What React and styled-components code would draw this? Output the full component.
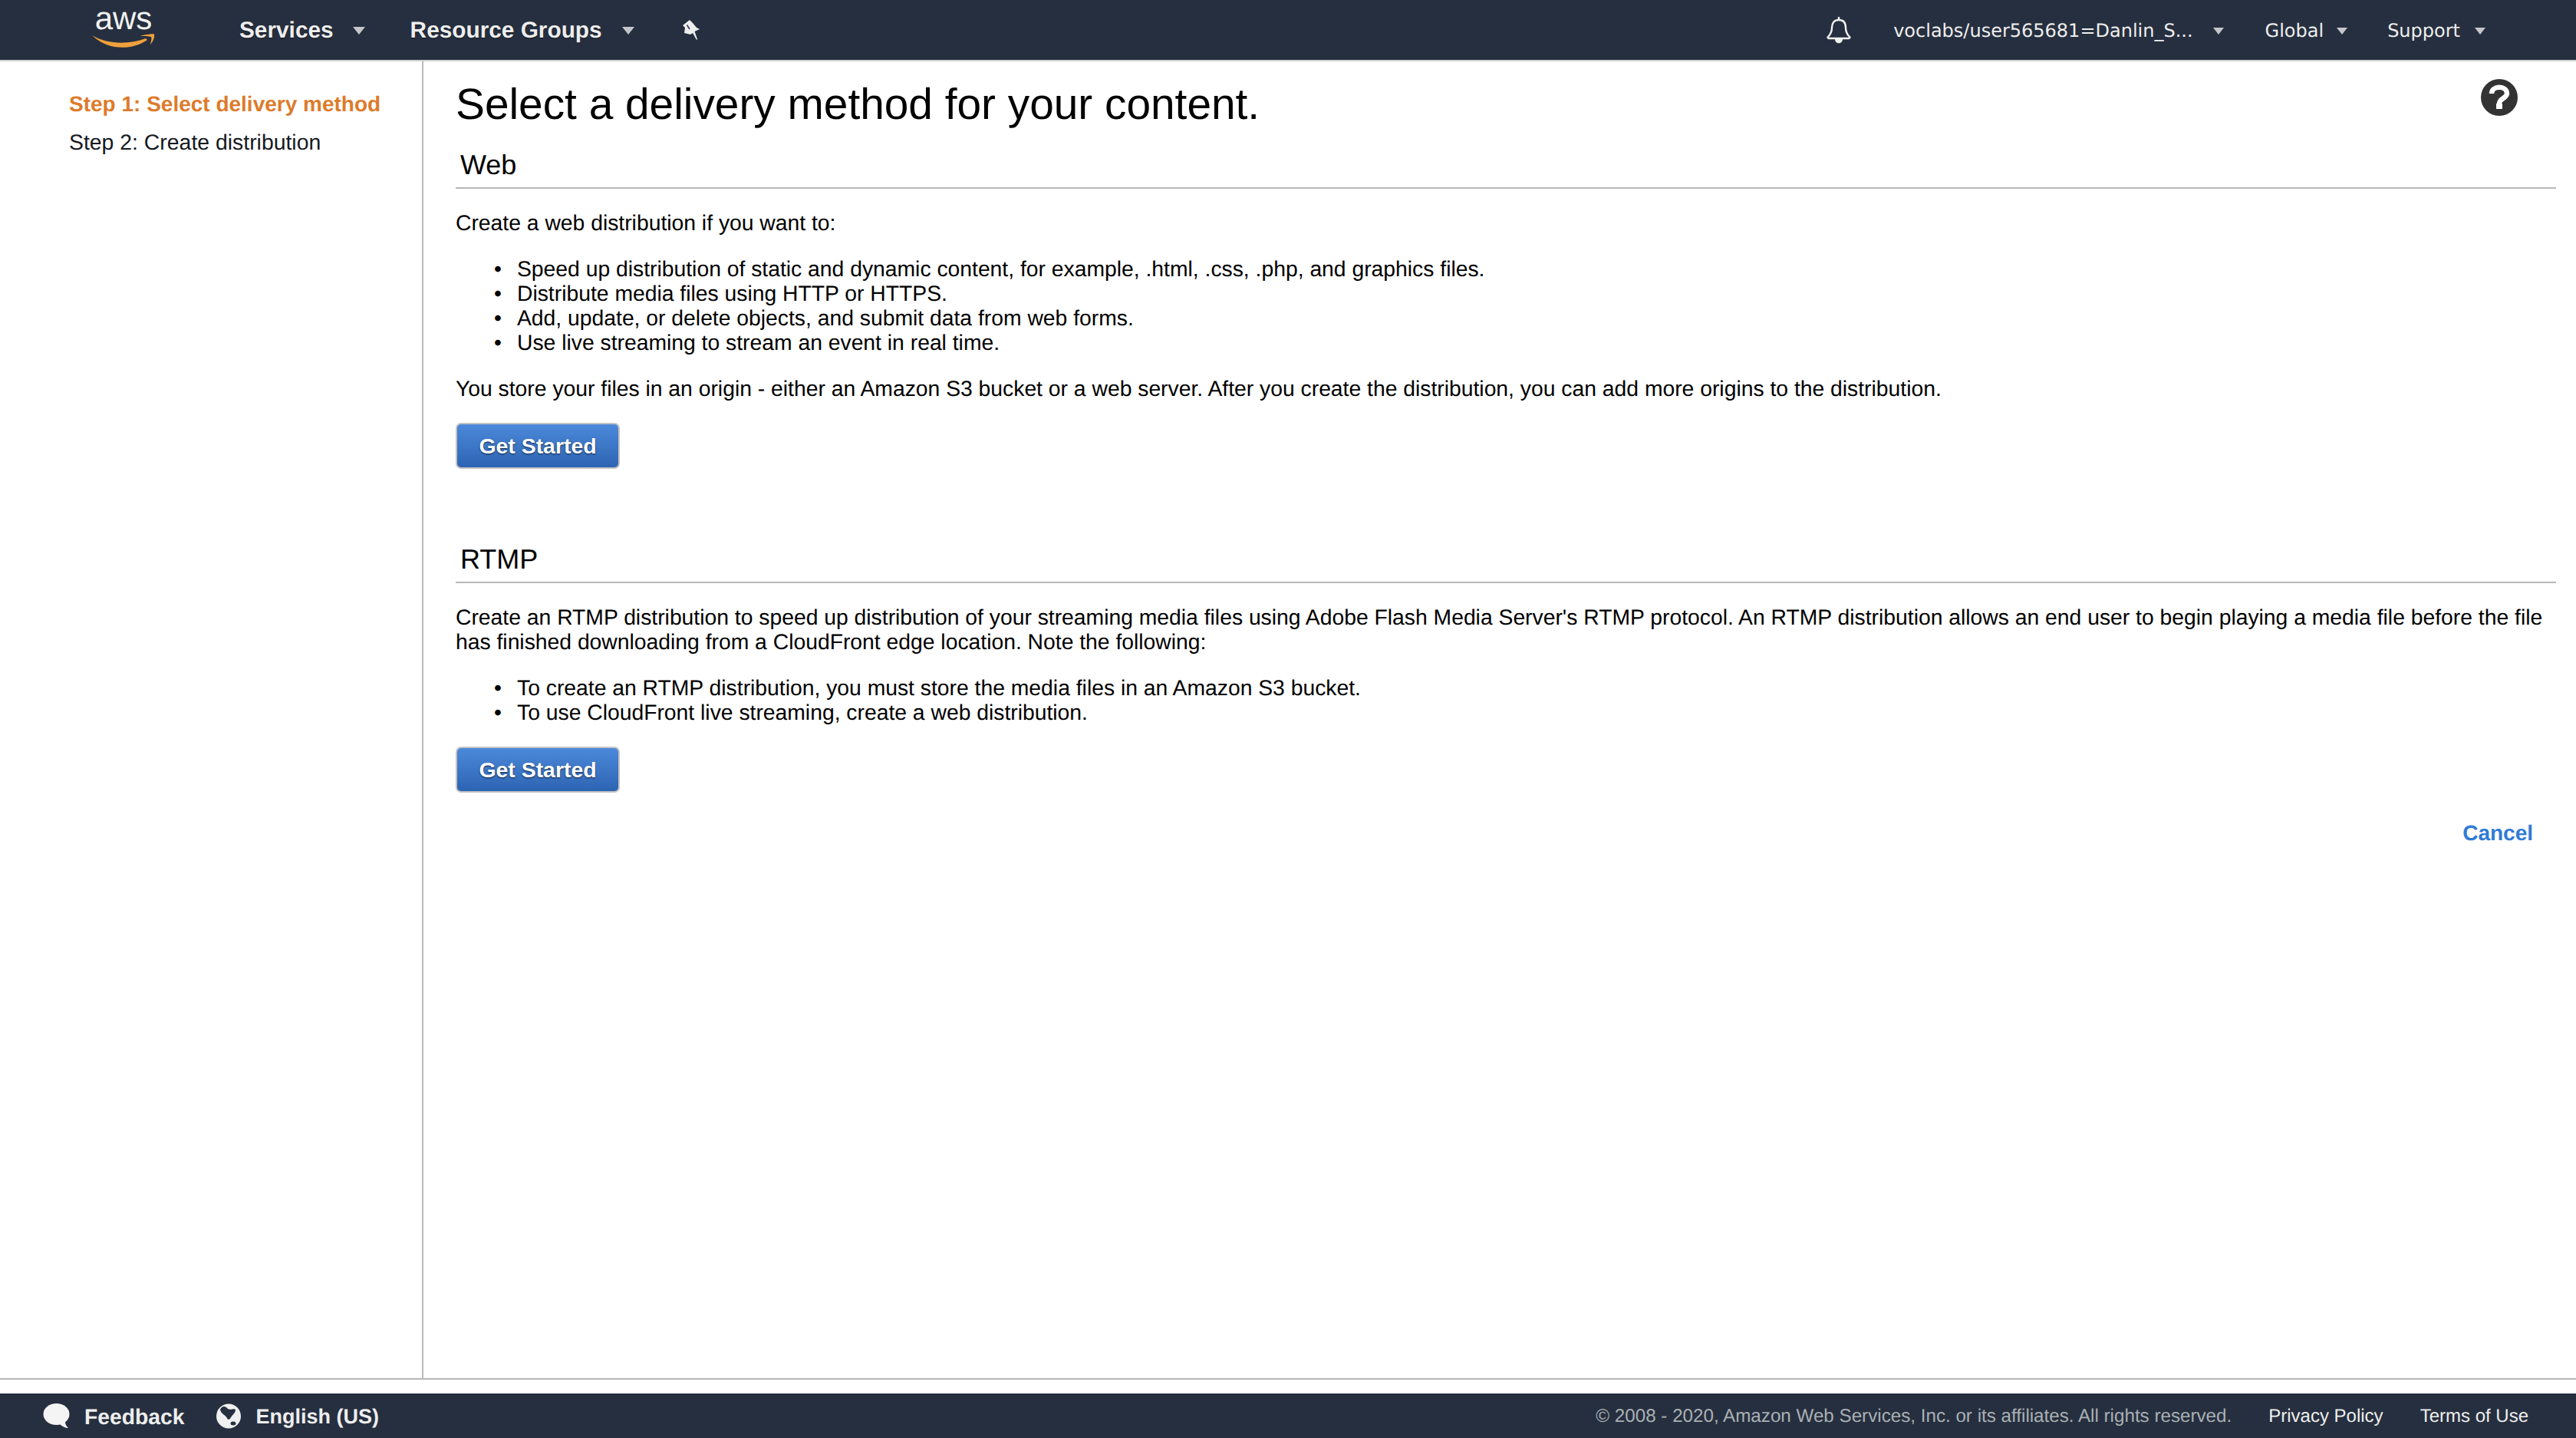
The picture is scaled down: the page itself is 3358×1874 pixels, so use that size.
import React from 'react';
import styled, { createGlobalStyle } from 'styled-components';

const GlobalStyle = createGlobalStyle`
  html, body {
    margin: 0;
    padding: 0;
    background: #fff;
  }
  body {
    font-family: "Liberation Sans", Arial, sans-serif;
    color: #000;
    text-rendering: geometricPrecision;
  }
`;

const Page = styled.div`
  display: flex;
  flex-direction: column;
  width: 3358px;
  height: 1874px;
  overflow: hidden;
`;

const TopNav = styled.header`
  display: flex;
  align-items: center;
  flex: 0 0 78px;
  background: #262f3f;
  border-bottom: 2px solid #d0d0d0;
  color: #eee;
`;

const LogoSlot = styled.div`
  display: flex;
  width: 312px;
  padding-left: 118px;
  box-sizing: border-box;
`;

const NavItem = styled.div`
  display: flex;
  align-items: center;
  padding-top: 2px;
  font-weight: 700;
  font-size: 29.8px;
  margin-right: ${props => props.$gap || 0}px;
  text-shadow: 0 1px 1px rgba(0, 0, 0, 0.6);
`;

const Caret = styled.span`
  width: 0;
  height: 0;
  margin-left: ${props => props.$gap}px;
  border-left: ${props => props.$size}px solid transparent;
  border-right: ${props => props.$size}px solid transparent;
  border-top: ${props => props.$size + 2}px solid #c4c6ca;
`;

const NavSpacer = styled.div`
  flex: 1;
`;

const AccountItem = styled.div`
  display: flex;
  align-items: center;
  padding-top: 2px;
  font-family: "DejaVu Sans", sans-serif;
  font-size: 24px;
  margin-right: ${props => props.$gap}px;
  color: #eee;
`;

const BellSlot = styled.div`
  display: flex;
  margin-right: 55px;
`;

const Main = styled.div`
  display: flex;
  flex: 1;
  min-height: 0;
  border-bottom: 2px solid #b8b8b8;
`;

const Sidebar = styled.nav`
  flex: 0 0 460px;
  padding: 30px 0 0 90px;
  border-right: 2px solid #b8b8b8;
`;

const StepLink = styled.div`
  font-size: ${props => (props.$active ? 28 : 28.4)}px;
  line-height: 51px;
  font-weight: ${props => (props.$active ? 700 : 400)};
  color: ${props => (props.$active ? '#dd7b2b' : '#16191f')};
`;

const Content = styled.main`
  position: relative;
  flex: 1;
  padding: 24px 26px 0 42px;
`;

const PageTitle = styled.h1`
  margin: 0;
  font-size: 56.8px;
  line-height: 66px;
  font-weight: 400;
`;

const SectionHeading = styled.h2`
  margin: ${props => props.$top}px 0 0;
  padding: 0 0 7px 6px;
  font-size: 36px;
  line-height: 44px;
  font-weight: 400;
  border-bottom: 2px solid #b8b8b8;
`;

const Para = styled.p`
  margin: ${props => props.$top}px 0 0;
  font-size: 28.3px;
  line-height: 32px;
`;

const BulletList = styled.ul`
  margin: 28px 0 0;
  padding-left: 80px;
  font-size: 28.3px;
  line-height: 32px;
  list-style: none;
`;

const Bullet = styled.li`
  &::before {
    content: '•';
    display: inline-block;
    width: 30px;
    margin-left: -30px;
  }
`;

const GetStarted = styled.button`
  display: block;
  width: 214px;
  height: 60px;
  margin-top: ${props => props.$top}px;
  padding: 0;
  font-family: inherit;
  font-size: 28.4px;
  font-weight: 700;
  color: #fff;
  text-shadow: 0 1px 2px rgba(0, 0, 0, 0.7);
  background: linear-gradient(#4c89da, #2d64b2);
  border: 2px solid #c4c4c4;
  border-radius: 7px;
`;

const CancelRow = styled.div`
  display: flex;
  justify-content: flex-end;
  margin-top: 37px;
  padding-right: 30px;
`;

const CancelLink = styled.a`
  font-size: 28px;
  font-weight: 700;
  color: #2f7bd6;
`;

const HelpButton = styled.div`
  position: absolute;
  top: 23px;
  right: 76px;
  display: flex;
`;

const Footer = styled.footer`
  display: flex;
  align-items: center;
  flex: 0 0 58px;
  margin-top: 18px;
  background: #262f3f;
`;

const FooterItem = styled.div`
  display: flex;
  align-items: center;
  margin-left: ${props => props.$left}px;
  font-size: ${props => props.$size}px;
  font-weight: 700;
  color: #eee;
`;

const FooterIcon = styled.span`
  display: flex;
  margin-right: ${props => props.$gap}px;
`;

const FooterLabel = styled.span`
  padding-top: 2px;
`;

const FooterLegal = styled.div`
  margin-left: auto;
  display: flex;
  align-items: center;
  padding-top: 2px;
  font-size: 24px;
  padding-right: 62px;
`;

const Copyright = styled.span`
  color: #a9b0b4;
  font-size: 24.2px;
  margin-right: 48px;
`;

const FooterLink = styled.a`
  color: #eee;
  margin-left: ${props => props.$left || 0}px;
`;

const AwsLogo = () => (
  <svg width="86" height="78" viewBox="0 -6 86 78">
    <text x="43" y="32" textAnchor="middle" fontFamily="Liberation Sans, sans-serif" fontSize="42" fill="#f2f2f2">aws</text>
    <path d="M2 40 C 20 51, 48 53, 72 44 L74 46 C 54 60, 22 60, 2 40 Z" fill="#f0a03c" />
    <path d="M65 41 C 72 39 80 38 83 38.5 C 84 43 81 49 78 52 C 79 47 80 44 79 42 C 76 41 70 41 65 41 Z" fill="#f0a03c" />
  </svg>
);

const PinIcon = () => (
  <svg width="24" height="27" viewBox="0 0 24 27">
    <path d="M10 0 L1 7 L4 10 L3 17 L11 19 L14 17 L19 26 L20 25 L16.5 15 L23 12 L19 10 L14 4 Z" fill="#eee" />
    <path d="M6.5 6.5 L10 12" stroke="#262f3f" strokeWidth="1.4" />
  </svg>
);

const BellIcon = () => (
  <svg width="32" height="35" viewBox="0 0 32 35" fill="none" stroke="#f2f2f2" strokeWidth="2.4">
    <path d="M16 4 C 10 4 7 8 7 14 C 7 20 5 23 2 26 C 1 27 2 28 3 28 H29 C30 28 31 27 30 26 C27 23 25 20 25 14 C25 8 22 4 16 4 Z" strokeLinejoin="round" />
    <path d="M16 0 V4" />
    <path d="M11 29 C11 36 21 36 21 29 Z" fill="#f2f2f2" stroke="none" />
  </svg>
);

const HelpIcon = () => (
  <svg width="48" height="48" viewBox="0 0 48 48">
    <circle cx="24" cy="24" r="24" fill="#333" />
    <path d="M14 19 C14 8 34 8 34 19 C34 25 24 25 24 32" fill="none" stroke="#fff" strokeWidth="6.5" />
    <rect x="20" y="32" width="8" height="7" fill="#fff" />
  </svg>
);

const BubbleIcon = () => (
  <svg width="35" height="33" viewBox="0 0 35 33">
    <ellipse cx="17.5" cy="14" rx="17" ry="14" fill="#f4f4f4" />
    <path d="M21 26 C 25 30 29 32 33 32 C 30 29 28.5 26 29 22 Z" fill="#f4f4f4" />
  </svg>
);

const GlobeIcon = () => (
  <svg width="32" height="33" viewBox="0 0 32 33">
    <circle cx="16" cy="16.5" r="16" fill="#f0f0f0" />
    <path d="M5 8 C 7 3 12 3 15 7 C 18 9 24 6 25 8 C 25 13 20 15 18 20 L15 21 C 13 15 6 14 5 8 Z" fill="#262f3f" />
    <ellipse cx="22" cy="26" rx="3.5" ry="2.5" fill="#262f3f" />
  </svg>
);

export default function App() {
  return (
    <Page>
      <GlobalStyle />
      <TopNav>
        <LogoSlot>
          <AwsLogo />
        </LogoSlot>
        <NavItem $gap={59}>
          Services
          <Caret $gap={25} $size={8} />
        </NavItem>
        <NavItem $gap={62}>
          Resource Groups
          <Caret $gap={26} $size={8} />
        </NavItem>
        <PinIcon />
        <NavSpacer />
        <BellSlot>
          <BellIcon />
        </BellSlot>
        <AccountItem $gap={54}>
          voclabs/user565681=Danlin_S...
          <Caret $gap={26} $size={7} />
        </AccountItem>
        <AccountItem $gap={52}>
          Global
          <Caret $gap={17} $size={7} />
        </AccountItem>
        <AccountItem $gap={118}>
          Support
          <Caret $gap={19} $size={7} />
        </AccountItem>
      </TopNav>
      <Main>
        <Sidebar>
          <StepLink $active>Step 1: Select delivery method</StepLink>
          <StepLink>Step 2: Create distribution</StepLink>
        </Sidebar>
        <Content>
          <HelpButton>
            <HelpIcon />
          </HelpButton>
          <PageTitle>Select a delivery method for your content.</PageTitle>
          <SectionHeading $top={23}>Web</SectionHeading>
          <Para $top={28}>Create a web distribution if you want to:</Para>
          <BulletList>
            <Bullet>Speed up distribution of static and dynamic content, for example, .html, .css, .php, and graphics files.</Bullet>
            <Bullet>Distribute media files using HTTP or HTTPS.</Bullet>
            <Bullet>Add, update, or delete objects, and submit data from web forms.</Bullet>
            <Bullet>Use live streaming to stream an event in real time.</Bullet>
          </BulletList>
          <Para $top={28}>
            You store your files in an origin - either an Amazon S3 bucket or a web server. After you create the distribution, you can add more origins to the distribution.
          </Para>
          <GetStarted $top={29}>Get Started</GetStarted>
          <SectionHeading $top={96}>RTMP</SectionHeading>
          <Para $top={28}>
            Create an RTMP distribution to speed up distribution of your streaming media files using Adobe Flash Media Server's RTMP protocol. An RTMP distribution allows an end user to begin playing a media file before the file has finished downloading from a CloudFront edge location. Note the following:
          </Para>
          <BulletList>
            <Bullet>To create an RTMP distribution, you must store the media files in an Amazon S3 bucket.</Bullet>
            <Bullet>To use CloudFront live streaming, create a web distribution.</Bullet>
          </BulletList>
          <GetStarted $top={29}>Get Started</GetStarted>
          <CancelRow>
            <CancelLink>Cancel</CancelLink>
          </CancelRow>
        </Content>
      </Main>
      <Footer>
        <FooterItem $left={56} $size={28.3}>
          <FooterIcon $gap={19}>
            <BubbleIcon />
          </FooterIcon>
          <FooterLabel>Feedback</FooterLabel>
        </FooterItem>
        <FooterItem $left={41} $size={27}>
          <FooterIcon $gap={20}>
            <GlobeIcon />
          </FooterIcon>
          <FooterLabel>English (US)</FooterLabel>
        </FooterItem>
        <FooterLegal>
          <Copyright>© 2008 - 2020, Amazon Web Services, Inc. or its affiliates. All rights reserved.</Copyright>
          <FooterLink>Privacy Policy</FooterLink>
          <FooterLink $left={48}>Terms of Use</FooterLink>
        </FooterLegal>
      </Footer>
    </Page>
  );
}
